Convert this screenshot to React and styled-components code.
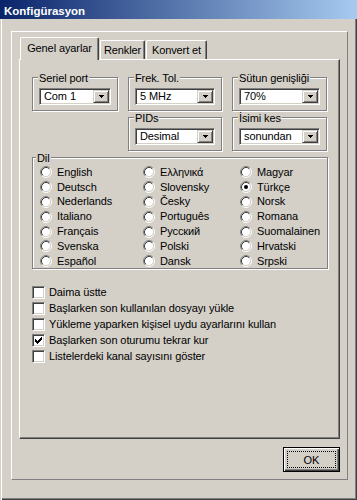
import React from "react";
import styled, { createGlobalStyle } from "styled-components";

const GlobalStyle = createGlobalStyle`
  html, body {
    margin: 0;
    padding: 0;
    background: #d4d0c8;
  }
  body {
    font-family: "Liberation Sans", Arial, sans-serif;
    font-size: 11px;
    letter-spacing: -0.1px;
    color: #000;
  }
  * {
    box-sizing: border-box;
  }
`;

const Window = styled.div`
  width: 357px;
  height: 500px;
  display: flex;
  flex-direction: column;
  background: #d4d0c8;
  box-shadow: inset 1px 0 0 #d4d0c8, inset 2px 0 0 #fff, inset -1px -1px 0 #404040,
    inset -2px -2px 0 #808080;
`;

const TitleBar = styled.div`
  height: 19px;
  padding: 5px 0 0 4px;
  background: linear-gradient(to right, #0a246a, #a6caf0);
  color: #fff;
  font-weight: bold;
  font-size: 11.5px;
  letter-spacing: 0;
  line-height: 13px;
`;

const Body = styled.div`
  flex: 1;
  padding: 12px 9px 20px 11px;
`;

const Frame = styled.div`
  height: 100%;
  display: flex;
  flex-direction: column;
  border: 1px solid;
  border-color: #fff #808080 #808080 #fff;
  padding: 5px 7px 7px;
`;

const TabStrip = styled.div`
  display: flex;
  align-items: flex-end;
  gap: 1px;
  height: 22px;
  padding-left: 1px;
  position: relative;
  z-index: 1;
`;

const Tab = styled.div`
  width: ${(p) => p.$width}px;
  height: ${(p) => (p.$active ? 23 : 19)}px;
  margin-bottom: ${(p) => (p.$active ? -1 : 0)}px;
  padding-top: ${(p) => (p.$active ? 4 : 3)}px;
  text-align: center;
  line-height: 13px;
  white-space: nowrap;
  background: #d4d0c8;
  border-top: 1px solid #fff;
  border-left: 1px solid #fff;
  border-right: 1px solid #404040;
  border-radius: 2px 2px 0 0;
  box-shadow: inset -1px 0 0 #808080;
`;

const Panel = styled.div`
  height: 380px;
  border: 1px solid;
  border-color: #fff #404040 #404040 #fff;
  box-shadow: inset -1px -1px 0 #808080;
  padding: 17px 11px 0 12px;
`;

const GroupGrid = styled.div`
  display: grid;
  grid-template-columns: 86px 94px 95px;
  column-gap: 10px;
  row-gap: 6px;
`;

const Group = styled.div`
  grid-column: ${(p) => p.$col || "auto"};
  height: ${(p) => (p.$height ? `${p.$height}px` : "auto")};
  margin-top: ${(p) => p.$gap || 0}px;
  border: 1px solid #808080;
  box-shadow: 1px 1px 0 #fff, inset 1px 1px 0 #fff;
  padding: 0 6px 5px ${(p) => p.$padLeft || 6}px;
`;

const Legend = styled.div`
  width: fit-content;
  margin: -6px 0 ${(p) => p.$after ?? 3}px ${(p) => p.$indent ?? -1}px;
  padding: 0 1px;
  background: #d4d0c8;
  line-height: 13px;
  white-space: nowrap;
`;

const ComboBox = styled.div`
  display: flex;
  height: 17px;
  padding: 1px;
  background: #fff;
  border: 1px solid;
  border-color: #808080 #fff #fff #808080;
  box-shadow: inset 1px 1px 0 #404040, inset -1px -1px 0 #d4d0c8;
`;

const ComboValue = styled.span`
  flex: 1;
  padding-left: 3px;
  line-height: 13px;
  white-space: nowrap;
  overflow: hidden;
`;

const DropButton = styled.span`
  width: 16px;
  display: flex;
  align-items: center;
  justify-content: center;
  background: #d4d0c8;
  border: 1px solid;
  border-color: #d4d0c8 #404040 #404040 #d4d0c8;
  box-shadow: inset 1px 1px 0 #fff, inset -1px -1px 0 #808080;
`;

const RadioGrid = styled.div`
  display: grid;
  grid-template-columns: 103px 97px 1fr;
  grid-template-rows: repeat(7, 14.8px);
  grid-auto-flow: column;
`;

const RadioItem = styled.label`
  display: flex;
  align-items: center;
  gap: 5px;
  white-space: nowrap;
  line-height: 13px;
`;

const CheckList = styled.div`
  margin-top: 15px;
  display: flex;
  flex-direction: column;
`;

const CheckRow = styled.label`
  display: flex;
  align-items: center;
  gap: 4px;
  height: 16px;
  line-height: 13px;
  white-space: nowrap;
`;

const CheckBox = styled.span`
  width: 13px;
  height: 13px;
  flex: none;
  display: flex;
  align-items: center;
  justify-content: center;
  background: #fff;
  border: 1px solid;
  border-color: #808080 #fff #fff #808080;
  box-shadow: inset 1px 1px 0 #404040, inset -1px -1px 0 #d4d0c8;
`;

const Footer = styled.div`
  display: flex;
  justify-content: flex-end;
  margin-top: 8px;
`;

const OkButton = styled.button`
  width: 57px;
  height: 25px;
  padding: 3px;
  font: inherit;
  color: #000;
  background: #d4d0c8;
  border: 1px solid #000;
  box-shadow: inset 1px 1px 0 #fff, inset -1px -1px 0 #404040, inset -2px -2px 0 #808080;
`;

const FocusRing = styled.span`
  height: 100%;
  display: flex;
  align-items: center;
  justify-content: center;
  border: 1px dotted #000;
`;

const languages = [
  "English", "Deutsch", "Nederlands", "Italiano", "Français", "Svenska", "Español",
  "Ελληνικά", "Slovensky", "Česky", "Português", "Русский", "Polski", "Dansk",
  "Magyar", "Türkçe", "Norsk", "Romana", "Suomalainen", "Hrvatski", "Srpski",
];

const options = [
  { label: "Daima üstte", checked: false },
  { label: "Başlarken son kullanılan dosyayı yükle", checked: false },
  { label: "Yükleme yaparken kişisel uydu ayarlarını kullan", checked: false },
  { label: "Başlarken son oturumu tekrar kur", checked: true },
  { label: "Listelerdeki kanal sayısını göster", checked: false },
];

const Arrow = () => (
  <svg width="5" height="3" viewBox="0 0 5 3" shapeRendering="crispEdges">
    <path d="M0 0h5v1H0zM1 1h3v1H1zM2 2h1v1H2z" fill="#000" />
  </svg>
);

const Combo = ({ value }) => (
  <ComboBox>
    <ComboValue>{value}</ComboValue>
    <DropButton>
      <Arrow />
    </DropButton>
  </ComboBox>
);

const RadioDot = ({ checked }) => (
  <svg width="12" height="12" viewBox="0 0 12 12">
    <circle cx="6" cy="6" r="4.5" fill="#fff" />
    <path d="M2.11 9.89A5.5 5.5 0 0 1 9.89 2.11" stroke="#808080" fill="none" />
    <path d="M9.89 2.11A5.5 5.5 0 0 1 2.11 9.89" stroke="#fff" fill="none" />
    <path d="M2.82 9.18A4.5 4.5 0 0 1 9.18 2.82" stroke="#404040" fill="none" />
    <path d="M9.18 2.82A4.5 4.5 0 0 1 2.82 9.18" stroke="#d4d0c8" fill="none" />
    {checked && <circle cx="6" cy="6" r="2" fill="#000" />}
  </svg>
);

const Tick = () => (
  <svg width="7" height="7" viewBox="0 0 7 7" shapeRendering="crispEdges">
    <path d="M6 0h1v3H6zM5 1h1v3H5zM4 2h1v3H4zM3 3h1v3H3zM2 4h1v3H2zM1 3h1v3H1zM0 2h1v3H0z" fill="#000" />
  </svg>
);

const App = () => {
  return (
    <Window>
      <GlobalStyle />
      <TitleBar>Konfigürasyon</TitleBar>
      <Body>
        <Frame>
          <TabStrip>
            <Tab $active $width={79}>Genel ayarlar</Tab>
            <Tab $width={45}>Renkler</Tab>
            <Tab $width={61}>Konvert et</Tab>
          </TabStrip>
          <Panel>
            <GroupGrid>
              <Group>
                <Legend>Seriel port</Legend>
                <Combo value="Com 1" />
              </Group>
              <Group>
                <Legend>Frek. Tol.</Legend>
                <Combo value="5 MHz" />
              </Group>
              <Group>
                <Legend>Sütun genişliği</Legend>
                <Combo value="70%" />
              </Group>
              <Group $col="2">
                <Legend>PIDs</Legend>
                <Combo value="Desimal" />
              </Group>
              <Group $col="3">
                <Legend>İsimi kes</Legend>
                <Combo value="sonundan" />
              </Group>
            </GroupGrid>
            <Group $gap={6} $height={112} $padLeft={7}>
              <Legend $indent={-4} $after={0}>Dil</Legend>
              <RadioGrid>
                {languages.map((lang) => (
                  <RadioItem key={lang}>
                    <RadioDot checked={lang === "Türkçe"} />
                    {lang}
                  </RadioItem>
                ))}
              </RadioGrid>
            </Group>
            <CheckList>
              {options.map((opt) => (
                <CheckRow key={opt.label}>
                  <CheckBox>{opt.checked && <Tick />}</CheckBox>
                  {opt.label}
                </CheckRow>
              ))}
            </CheckList>
          </Panel>
          <Footer>
            <OkButton>
              <FocusRing>OK</FocusRing>
            </OkButton>
          </Footer>
        </Frame>
      </Body>
    </Window>
  );
};

export default App;
